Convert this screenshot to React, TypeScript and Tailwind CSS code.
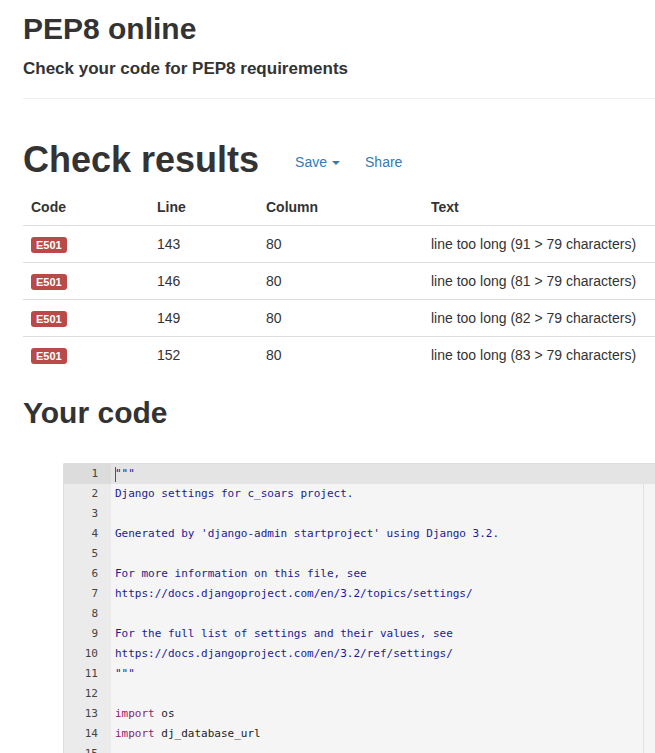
import React from "react";

type Token = { text: string; kind?: "str" | "kw" };

const results = [
  { code: "E501", line: 143, column: 80, text: "line too long (91 > 79 characters)" },
  { code: "E501", line: 146, column: 80, text: "line too long (81 > 79 characters)" },
  { code: "E501", line: 149, column: 80, text: "line too long (82 > 79 characters)" },
  { code: "E501", line: 152, column: 80, text: "line too long (83 > 79 characters)" },
];

const codeLines: Token[][] = [
  [{ text: '"""', kind: "str" }],
  [{ text: "Django settings for c_soars project.", kind: "str" }],
  [],
  [{ text: "Generated by 'django-admin startproject' using Django 3.2.", kind: "str" }],
  [],
  [{ text: "For more information on this file, see", kind: "str" }],
  [{ text: "https://docs.djangoproject.com/en/3.2/topics/settings/", kind: "str" }],
  [],
  [{ text: "For the full list of settings and their values, see", kind: "str" }],
  [{ text: "https://docs.djangoproject.com/en/3.2/ref/settings/", kind: "str" }],
  [{ text: '"""', kind: "str" }],
  [],
  [{ text: "import", kind: "kw" }, { text: " os" }],
  [{ text: "import", kind: "kw" }, { text: " dj_database_url" }],
  [],
  [],
];

const tokenClass = (kind?: string) =>
  kind === "str" ? "text-[#1a1a9a]" : kind === "kw" ? "text-[#8a1f6e]" : "text-[#222]";

const App: React.FC = () => {
  return (
    <div className="h-[753px] w-[655px] overflow-hidden bg-white font-['Liberation_Sans',Arial,sans-serif] text-[#333]">
      <div className="pl-[23px]">
        {/* Header */}
        <h1 className="mt-[12px] text-[30px] leading-[33px] font-bold">PEP8 online</h1>
        <p className="mt-[14px] text-[17px] leading-[19px] font-bold">
          Check your code for PEP8 requirements
        </p>
        <div className="mt-[20px] border-t border-[#eee]" />

        {/* Results */}
        <div className="mt-[41px] flex items-start">
          <h2 className="text-[36px] leading-[40px] font-bold">Check results</h2>
          <div className="ml-[36px] mt-[12px] flex items-center text-[14px] leading-[20px] text-[#337ab7]">
            <a className="flex items-center gap-[5px]">
              Save
              <span className="mt-[1px] h-0 w-0 border-x-[4px] border-t-[4px] border-x-transparent border-t-[#337ab7]" />
            </a>
            <a className="ml-[25px]">Share</a>
          </div>
        </div>

        <div className="mt-[9px] text-[14px] leading-[20px]">
          <div className="grid grid-cols-[126px_109px_165px_1fr] border-b border-[#ddd] font-bold">
            {["Code", "Line", "Column", "Text"].map((h) => (
              <div key={h} className="p-[8px]">
                {h}
              </div>
            ))}
          </div>
          {results.map((r, i) => (
            <div
              key={r.line}
              className={`grid grid-cols-[126px_109px_165px_1fr] ${i < results.length - 1 ? "border-b border-[#ddd]" : ""}`}
            >
              <div className="flex h-[36px] items-center px-[8px]">
                <span className="mt-[1px] rounded-[3px] bg-[#b94a48] px-[5px] py-[2px] text-[11px] leading-[12px] font-bold text-white">
                  {r.code}
                </span>
              </div>
              <div className="p-[8px]">{r.line}</div>
              <div className="p-[8px]">{r.column}</div>
              <div className="p-[8px] whitespace-nowrap">{r.text}</div>
            </div>
          ))}
        </div>

        {/* Code */}
        <h2 className="mt-[23px] text-[30px] leading-[33px] font-bold">Your code</h2>

        <div className="mt-[34px] ml-[40px] flex rounded-tl-[2px] border-l border-t border-[#ddd] bg-[#f5f5f5] font-['DejaVu_Sans_Mono',monospace] text-[11px] leading-[20px]">
          <div className="w-[47px] shrink-0 bg-[#ebebeb] text-right text-[#444]">
            {codeLines.map((_, i) => (
              <div key={i} className={`pr-[13px] ${i === 0 ? "bg-[#dcdcdc]" : ""}`}>
                {i + 1}
              </div>
            ))}
          </div>
          <div className="relative flex-1">
            <div className="absolute top-0 bottom-0 left-[532px] w-px bg-[#e0e0e0]" />
            {codeLines.map((line, i) => (
              <div
                key={i}
                className={`relative h-[20px] whitespace-pre pl-[4px] ${i === 0 ? "bg-[#e4e4e4]" : ""}`}
              >
                {i === 0 && <span className="absolute left-[4px] top-[3px] h-[15px] w-px bg-[#555]" />}
                {line.map((t, j) => (
                  <span key={j} className={tokenClass(t.kind)}>
                    {t.text}
                  </span>
                ))}
              </div>
            ))}
          </div>
        </div>
      </div>
    </div>
  );
};

export default App;
